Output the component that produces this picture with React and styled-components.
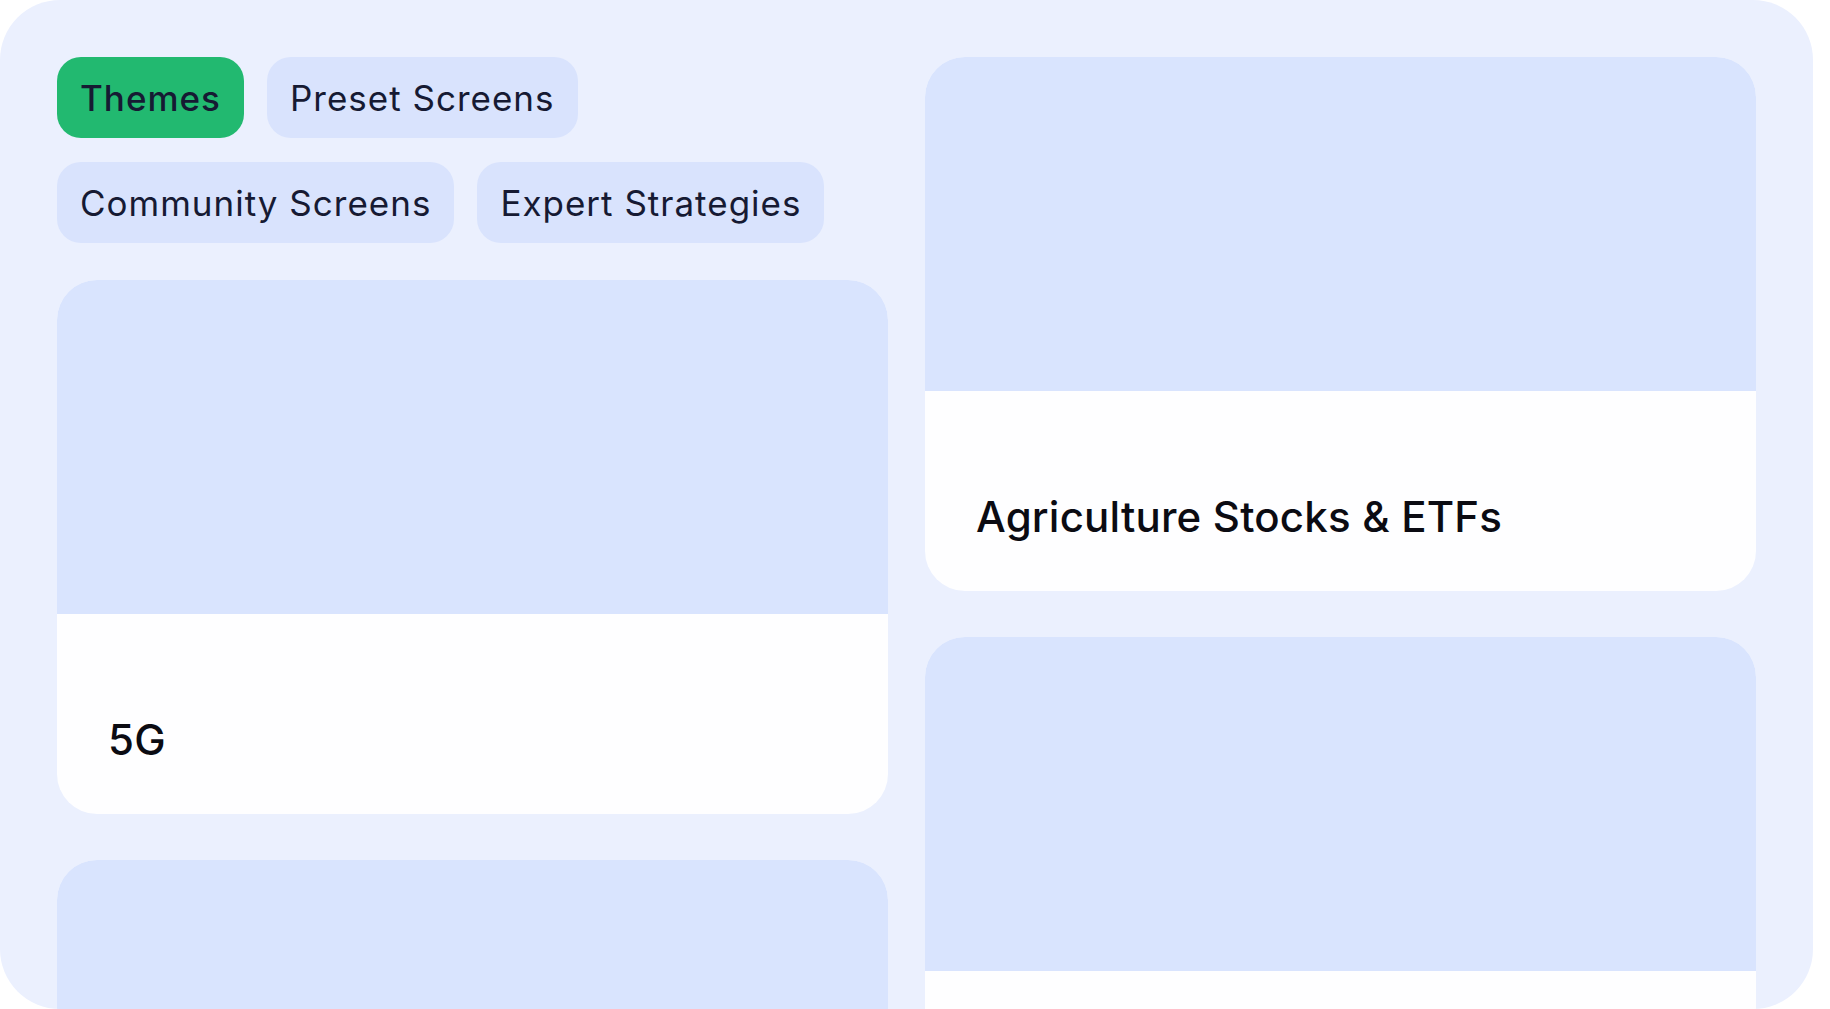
import React from 'react';
import styled, { createGlobalStyle } from 'styled-components';

const GlobalStyle = createGlobalStyle`
  html, body {
    margin: 0;
    padding: 0;
    background: #ffffff;
  }
  body {
    font-family: Inter, "Open Sans", sans-serif;
    color: #161a33;
  }
`;

const Frame = styled.div`
  width: 1813px;
  height: 1009px;
  box-sizing: border-box;
  padding: 57px;
  background: #ebf0fe;
  border-radius: 60px;
  overflow: hidden;
  display: grid;
  grid-template-columns: 831px 831px;
  column-gap: 37px;
  align-items: start;
`;

const Column = styled.div`
  display: flex;
  flex-direction: column;
  gap: 46px;
`;

const TabArea = styled.div`
  display: flex;
  flex-wrap: wrap;
  gap: 24px 23px;
  width: 800px;
  margin-bottom: -9px;
`;

const Tab = styled.button`
  height: 81px;
  padding: 0 23px;
  border: none;
  border-radius: 24px;
  background: ${(p) => (p.$active ? '#22b970' : '#d9e3fd')};
  color: #161a33;
  font-family: Inter, "Open Sans", sans-serif;
  font-size: 35px;
  font-weight: ${(p) => (p.$active ? 500 : 400)};
  letter-spacing: 1px;
  cursor: pointer;
`;

const Card = styled.div`
  display: flex;
  flex-direction: column;
  border-radius: 40px;
  overflow: hidden;
  background: #fefeff;
  flex-shrink: 0;
`;

const Cover = styled.div`
  height: 334px;
  background: #d9e4fe;
`;

const Body = styled.div`
  height: 200px;
  box-sizing: border-box;
  padding: 0 51px 49px;
  display: flex;
  align-items: flex-end;
`;

const Title = styled.h3`
  margin: 0;
  font-family: Inter, "Open Sans", sans-serif;
  font-size: 42px;
  font-weight: 500;
  color: #0b0b12;
  letter-spacing: 0.2px;
`;

const tabs = [
  { label: 'Themes', active: true },
  { label: 'Preset Screens' },
  { label: 'Community Screens' },
  { label: 'Expert Strategies' },
];

const ThemeCard = ({ title }) => (
  <Card>
    <Cover />
    <Body>{title && <Title>{title}</Title>}</Body>
  </Card>
);

const App = () => {
  return (
    <>
      <GlobalStyle />
      <Frame>
        <Column>
          <TabArea>
            {tabs.map((t) => (
              <Tab key={t.label} $active={t.active}>
                {t.label}
              </Tab>
            ))}
          </TabArea>
          <ThemeCard title="5G" />
          <ThemeCard title="" />
        </Column>
        <Column>
          <ThemeCard title="Agriculture Stocks & ETFs" />
          <ThemeCard title="" />
        </Column>
      </Frame>
    </>
  );
};

export default App;
